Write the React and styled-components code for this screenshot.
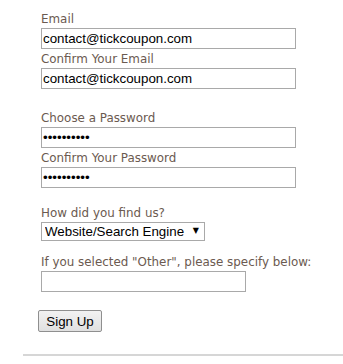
import React from 'react';
import styled, { createGlobalStyle } from 'styled-components';

const Global = createGlobalStyle`
    html, body {
        margin: 0;
        padding: 0;
        background: #fff;
    }
`;

const Page = styled.div`
    width: 343px;
    height: 364px;
    overflow: hidden;
`;

const Form = styled.form`
    display: flex;
    flex-direction: column;
    align-items: flex-start;
    padding: 9px 0 0 41px;
`;

const Group = styled.div`
    display: flex;
    flex-direction: column;
    align-items: flex-start;
    margin-top: ${({ gap }) => gap || 0}px;
`;

const Label = styled.label`
    display: block;
    padding-top: 2px;
    font-family: "DejaVu Sans", Verdana, sans-serif;
    font-size: 11.9px;
    line-height: 17px;
    color: #6b5a50;
    white-space: nowrap;
`;

const Input = styled.input`
    box-sizing: border-box;
    width: ${({ w }) => w || 255}px;
    height: 21px;
    margin: 0;
    padding: 0 2px 0 1px;
    border: 1px solid #a9a9a9;
    font-family: "Liberation Sans", Arial, sans-serif;
    font-size: 13.33px;
    color: #000;
    background: #fff;
    outline: none;
`;

const SelectWrap = styled.div`
    position: relative;
    width: 164px;
    height: 19px;
`;

const Select = styled.select`
    appearance: none;
    box-sizing: border-box;
    width: 164px;
    height: 19px;
    margin: 0;
    padding: 0 0 0 3px;
    border: 1px solid #a9a9a9;
    border-radius: 0;
    background: #fff;
    font-family: "Liberation Sans", Arial, sans-serif;
    font-size: 13.33px;
    color: #000;
    outline: none;
`;

const Arrow = styled.span`
    position: absolute;
    right: 6px;
    top: 4px;
    font-family: "DejaVu Sans", sans-serif;
    font-size: 8px;
    line-height: 10px;
    color: #000;
    pointer-events: none;
`;

const Button = styled.button`
    box-sizing: border-box;
    width: 64px;
    height: 22px;
    margin: 18px 0 0 -3px;
    padding: 0;
    border: 1px solid #8f8f8f;
    border-radius: 2px;
    background: linear-gradient(#f2f2f2, #e0e0e0);
    font-family: "Liberation Sans", Arial, sans-serif;
    font-size: 13.33px;
    color: #000;
`;

const Rule = styled.hr`
    margin: 22px 0 0 23px;
    border: none;
    border-top: 2px solid #d6d6d6;
    height: 0;
`;

export default function App() {
    return (
        <Page>
            <Global />
            <Form onSubmit={e => e.preventDefault()}>
                <Group>
                    <Label>Email</Label>
                    <Input type="text" defaultValue="contact@tickcoupon.com" />
                    <Label>Confirm Your Email</Label>
                    <Input type="text" defaultValue="contact@tickcoupon.com" />
                </Group>
                <Group gap={19}>
                    <Label>Choose a Password</Label>
                    <Input type="password" defaultValue="tickcoupon" />
                    <Label>Confirm Your Password</Label>
                    <Input type="password" defaultValue="tickcoupon" />
                </Group>
                <Group gap={15}>
                    <Label>How did you find us?</Label>
                    <SelectWrap>
                        <Select defaultValue="web">
                            <option value="web">Website/Search Engine</option>
                            <option value="friend">Friend</option>
                            <option value="other">Other</option>
                        </Select>
                        <Arrow>▼</Arrow>
                    </SelectWrap>
                </Group>
                <Group gap={11}>
                    <Label>If you selected "Other", please specify below:</Label>
                    <Input type="text" w={205} />
                </Group>
                <Button type="submit">Sign Up</Button>
            </Form>
            <Rule />
        </Page>
    );
}
